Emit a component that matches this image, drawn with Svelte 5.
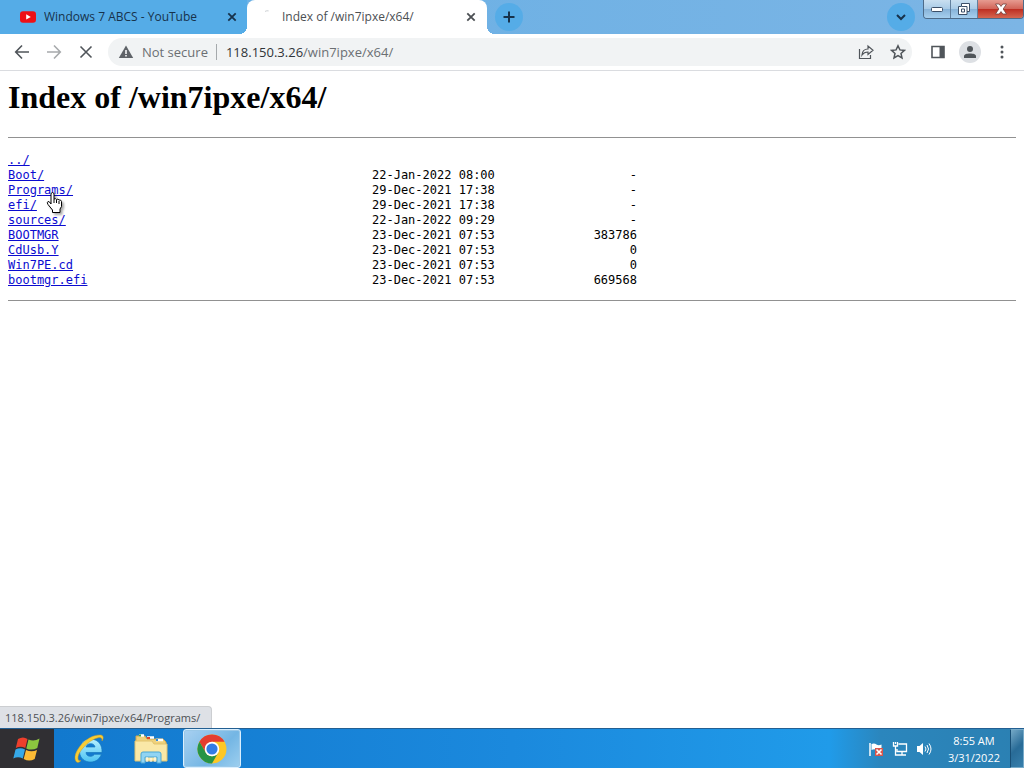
<script>
  const entries = [
    { name: '../', date: '', size: '' },
    { name: 'Boot/', date: '22-Jan-2022 08:00', size: '-' },
    { name: 'Programs/', date: '29-Dec-2021 17:38', size: '-' },
    { name: 'efi/', date: '29-Dec-2021 17:38', size: '-' },
    { name: 'sources/', date: '22-Jan-2022 09:29', size: '-' },
    { name: 'BOOTMGR', date: '23-Dec-2021 07:53', size: '383786' },
    { name: 'CdUsb.Y', date: '23-Dec-2021 07:53', size: '0' },
    { name: 'Win7PE.cd', date: '23-Dec-2021 07:53', size: '0' },
    { name: 'bootmgr.efi', date: '23-Dec-2021 07:53', size: '669568' }
  ];
  let address = $state('118.150.3.26/win7ipxe/x64/');
</script>

{#snippet cross()}
  <svg width="10" height="10" viewBox="0 0 10 10" aria-hidden="true"><path d="M1.3 1.3l7.4 7.4M8.7 1.3L1.3 8.7" stroke="currentColor" stroke-width="1.8" fill="none" /></svg>
{/snippet}

<div class="screen">
  <header class="strip">
    <div class="tab idle">
      <svg width="16" height="12" viewBox="0 0 16 12" aria-hidden="true"><rect width="16" height="11.5" y=".3" rx="3" fill="#ee1016" /><path d="M6.2 3.3v5.2L10.8 5.9z" fill="#fff" /></svg>
      <span class="title">Windows 7 ABCS - YouTube</span>
      <button class="close" aria-label="Close tab">{@render cross()}</button>
    </div>
    <div class="tab active">
      <svg class="spinner" width="16" height="16" viewBox="0 0 16 16" aria-hidden="true"><path d="M5 2.4Q7 1.4 8.6 1.9" stroke="#ccd0d3" fill="none" /></svg>
      <span class="title">Index of /win7ipxe/x64/</span>
      <button class="close" aria-label="Close tab">{@render cross()}</button>
    </div>
    <button class="round" aria-label="New tab"><svg width="14" height="14" viewBox="0 0 14 14"><path d="M7 1.5v11M1.5 7h11" stroke="currentColor" stroke-width="2" /></svg></button>
    <button class="round search" aria-label="Search tabs"><svg width="12" height="12" viewBox="0 0 12 12"><path d="M2 4l4 4 4-4" fill="none" stroke="currentColor" stroke-width="2" /></svg></button>
    <div class="controls">
      <button aria-label="Minimize"><svg width="14" height="8" viewBox="0 0 14 8"><rect x="1.5" y="2.5" width="11" height="4" rx="1" fill="#fff" stroke="#3b4f68" /></svg></button>
      <button aria-label="Restore"><svg width="14" height="14" viewBox="0 0 14 14"><path d="M4.500 1.500h8v8h-2.500v3H1.500v-8h3z" fill="#fff" stroke="#3b4f68" /><path d="M4.500 7h3v3h-3zM5 4.500h5v5" fill="none" stroke="#3b4f68" /></svg></button>
      <button class="quit" aria-label="Close"><svg width="14" height="12" viewBox="0 0 14 12"><path d="M1.500 1h3.700L7 3.400 8.800 1h3.700L9.200 6l3.300 5H8.800L7 8.600 5.200 11H1.500L4.800 6z" fill="#fff" stroke="#71423f" stroke-width=".8" /></svg></button>
    </div>
  </header>

  <nav class="toolbar" aria-label="Navigation">
    <button aria-label="Back"><svg width="16" height="16" viewBox="0 0 16 16"><path d="M15 8H2M8 1.500L1.700 8 8 14.500" /></svg></button>
    <button class="faded" aria-label="Forward"><svg width="16" height="16" viewBox="0 0 16 16"><path d="M1 8h13M8 1.500L14.300 8 8 14.500" /></svg></button>
    <button aria-label="Stop"><svg width="16" height="16" viewBox="0 0 16 16"><path d="M2.500 2.500l11 11M13.500 2.500l-11 11" /></svg></button>
    <div class="omnibox">
      <svg class="warn" width="16" height="16" viewBox="0 0 16 16" aria-hidden="true"><path d="M8 1.500L15.200 14H.8z" fill="#5f6368" /><path d="M8 6v4M8 11v1.600" stroke="#fff" stroke-width="1.500" /></svg>
      <span class="secure">Not secure</span>
      <label class="address">
        <span class="shown" aria-hidden="true">{address.split('/')[0]}<i>{address.slice(address.indexOf('/'))}</i></span>
        <input aria-label="Address" bind:value={address} />
      </label>
      <button aria-label="Share"><svg width="18" height="18" viewBox="0 0 18 18"><path d="M2.500 6v9.500h11V12M5 12c.3-4 2.500-6 6-6V3l5 4.300-5 4.200V9c-3 0-4.500.8-6 3z" stroke-width="1.200" /></svg></button>
      <button aria-label="Bookmark this page"><svg width="16" height="16" viewBox="0 0 16 16"><path d="M8 1.800l1.900 4.100 4.500.5-3.400 3 1 4.500L8 11.600l-4 2.300 1-4.500-3.400-3 4.500-.5z" stroke-width="1.500" /></svg></button>
    </div>
    <button aria-label="Side panel"><svg width="16" height="16" viewBox="0 0 16 16"><path d="M2 2.500h12v11H2z" stroke-width="1.600" /><path d="M9.500 2.500H14v11H9.500z" fill="#50555a" stroke="none" /></svg></button>
    <button class="profile" aria-label="Profile"><svg width="14" height="14" viewBox="0 0 14 14"><circle cx="7" cy="4" r="3" fill="#50555a" stroke="none" /><path d="M1 13v-2c0-3.300 12-3.300 12 0v2z" fill="#50555a" stroke="none" /></svg></button>
    <button aria-label="Menu"><svg width="16" height="16" viewBox="0 0 16 16"><g fill="#50555a" stroke="none"><circle cx="8" cy="3" r="1.500" /><circle cx="8" cy="8" r="1.500" /><circle cx="8" cy="13" r="1.500" /></g></svg></button>
  </nav>

  <main>
    <h1>Index of /win7ipxe/x64/</h1>
    <hr />
    <table aria-label="Files">
      <tbody>
        {#each entries as entry}
          <tr><td class="name"><a href="#{entry.name}">{entry.name}</a></td><td class="date">{entry.date}</td><td class="size">{entry.size}</td></tr>
        {/each}
      </tbody>
    </table>
    <hr />
    <svg class="pointer" width="17" height="23" viewBox="0 0 17 23" aria-hidden="true"><path d="M5 13V2.500Q6.500.500 8 2.500V8q1.500-1 2.500.5 1.500-1 2.500.5 2-.5 2.500 1.500v5L14 18v3.500H6.500V19L2 13.500q-1.500-2 0-3 1.500-.3 3 2.500z" fill="#fff" stroke="#000" /><path d="M8 8v4M10.500 9v3M13 10v3" stroke="#000" /></svg>
    <div class="status">118.150.3.26/win7ipxe/x64/Programs/</div>
  </main>

  <footer class="taskbar">
    <button class="start" aria-label="Start">
      <svg width="28" height="26" viewBox="0 0 28 26"><path d="M5 3q5-3 9.500 0L12.300 12Q7.500 9.500 2.800 12z" fill="#ed3f2c" /><path d="M15.500 3.500Q21 6 26.500 2.500L24.300 12q-5.500 3-11 .4z" fill="#8bc53f" /><path d="M2.500 13.500Q7.500 11 12 13.500L9.800 22.500Q5 20 .3 22.500z" fill="#36a9e8" /><path d="M13 14q5.500 2.500 11 0L21.700 23q-5.500 3-11 0z" fill="#fdbb35" /></svg>
    </button>
    <button class="app" aria-label="Internet Explorer">
      <svg width="32" height="32" viewBox="0 0 32 32"><defs><linearGradient id="ie" y2="1" x2="0"><stop stop-color="#b6f0ff" /><stop offset="1" stop-color="#4cc3f3" /></linearGradient></defs><path fill-rule="evenodd" d="M29 19.500H13c.5 4.500 6 5 8.500 1.800h7C26 27.500 21 29.500 16 29 9.500 28.200 6 23 6.500 17 7 9.500 12 5.500 18 6c7.500.5 11.500 6 11 13.500zM13 14h9c-.5-4.500-8-4.500-9 0z" fill="url(#ie)" stroke="#1475bd" stroke-width=".7" /><path d="M3.500 29C-3 22 13 1 27.500 2c3 .2 3.500 3 1.500 6 .3-3-1-4-4-3.200C15 7 4 20 5 26c.2 1.500 1.500 2 3 1.500-1.500 1.700-3 2.500-4.500 1.500z" fill="#f7cd35" stroke="#ca9827" stroke-width=".5" /></svg>
    </button>
    <button class="app" aria-label="File Explorer">
      <svg width="34" height="32" viewBox="0 0 34 32"><path d="M2 3h9l2 3h16l3 3v18H2z" fill="#efd17b" stroke="#d2a851" /><path d="M5 2.500h5M13 4.500h7M22 7h7" stroke="#fff" stroke-width="2.500" /><path d="M5 2.500h2" stroke="#36a44b" stroke-width="2" /><path d="M13 5h3" stroke="#dc482c" stroke-width="2" /><path d="M22 7h2" stroke="#348bdb" stroke-width="2" /><path d="M1 8h17l2 3h13v17H1z" fill="#fae8a7" stroke="#e1c36e" /><path d="M7 30v-9q0-2 2-2h16q2 0 2 2v9h-4v-6H11v6z" fill="#91d4f3" stroke="#4ba7d6" /><path d="M13 24v5M17 25v4M21 24v5" stroke="#fff" /></svg>
    </button>
    <button class="app current" aria-label="Google Chrome">
      <svg width="30" height="30" viewBox="0 0 30 30"><circle cx="15" cy="15" r="14.500" fill="#fcc725" /><path d="M2.440 7.750A14.500 14.500 0 0 1 27.560 7.750H15L8.700 18.600z" fill="#e43d30" /><path d="M2.440 7.750A14.500 14.500 0 0 0 15 29.500L21.300 18.600A7.250 7.250 0 0 1 8.720 18.600z" fill="#279447" /><circle cx="15" cy="15" r="7.250" fill="#fff" /><circle cx="15" cy="15" r="5.600" fill="#327ce5" /></svg>
    </button>
    <div class="tray">
      <button aria-label="Action Center"><svg width="16" height="16" viewBox="0 0 16 16"><path d="M2 2v13" stroke="#fff" stroke-width="1.500" /><path d="M3.500 3q3-1 5 .5t5 0v6q-3 1-5-.5t-5 0z" fill="#fff" /><path d="M7 7h8v8H7z" fill="#d8564c" /><path d="M8.500 8.500l5 5m0-5l-5 5" stroke="#fff" stroke-width="1.600" /></svg></button>
      <button aria-label="Network"><svg width="16" height="16" viewBox="0 0 16 16"><path d="M6.500 3h8v7.500H5V8M10 10.500V14M6 14h8M1.500 1v4h4V1M3.500 5v9H7M3.500 1v2" fill="none" stroke="#fff" stroke-width="1.300" /></svg></button>
      <button aria-label="Volume"><svg width="16" height="16" viewBox="0 0 16 16"><path d="M1 5h2.500L7 2v12l-3.500-3H1z" fill="#fff" /><path d="M9 5.500q2 2.500 0 5M11 4q3 4 0 8M13 2.500q4 5.500 0 11" fill="none" stroke="#fff" /></svg></button>
      <time datetime="2022-03-31T08:55">8:55 AM<br />3/31/2022</time>
      <button class="desktop" aria-label="Show desktop"></button>
    </div>
  </footer>
</div>

<style>
  :global(body) { margin: 0; }
  * { box-sizing: border-box; }
  button { display: grid; place-items: center; margin: 0; padding: 0; border: 0; background: none; color: inherit; flex: none; }
  svg { display: block; flex: none; }
  .screen { display: flex; flex-direction: column; min-height: 100vh; background: #fff; font: 12px/16px "Open Sans", sans-serif; }

  .strip { display: flex; align-items: flex-end; height: 34px; background: linear-gradient(90deg, #64aee4, #7cb5e5); color: #17324b; }
  .tab { display: flex; align-items: center; height: 34px; flex: 0 1 240px; min-width: 0; padding: 0 11px 0 13px; gap: 8px; }
  .idle { flex-basis: 247px; padding-left: 20px; padding-right: 10px; background: #55ace7; }
  .active { position: relative; background: #fff; border-radius: 8px 8px 0 0; color: #4b4f53; }
  .active::before, .active::after { content: ""; position: absolute; bottom: 0; width: 8px; height: 8px; }
  .active::before { right: 100%; background: radial-gradient(circle at 0 0, #55ace7 8px, #fff 8px); }
  .active::after { left: 100%; background: radial-gradient(circle at 100% 0, #70b1e5 8px, #fff 8px); }
  .title { flex: 1; white-space: nowrap; overflow: hidden; }
  .spinner { margin-right: -2px; }
  .close { width: 10px; height: 16px; }
  .round { width: 28px; height: 28px; margin: 0 0 3px 8px; border-radius: 50%; background: #55ace7; }
  .search { margin-left: auto; margin-right: 8px; }
  .controls { display: flex; align-self: flex-start; height: 19px; border: 1px solid #4d6b89; border-top: 0; border-radius: 0 0 4px 4px; overflow: hidden; }
  .controls button { width: 27px; background: linear-gradient(#c9dff0, #a8cbe7 50%, #86b2d8 50%, #a6cfee); border-right: 1px solid #62809e; }
  .controls .quit { width: 45px; border: 0; background: linear-gradient(#e69b90, #d16357 50%, #bd2d21 50%, #d56650); }

  .toolbar { display: flex; align-items: center; gap: 4px; height: 37px; padding: 0 8px; border-bottom: 1px solid #dadce0; }
  .toolbar button { width: 28px; height: 28px; }
  .toolbar button svg { fill: none; stroke: #50555a; stroke-width: 1.6; }
  .toolbar .faded { opacity: .5; }
  .omnibox { display: flex; flex: 1; align-items: center; height: 28px; min-width: 0; margin: 0 8px 0 4px; padding: 0 0 0 10px; border-radius: 14px; background: #f1f3f4; font-size: 13px; color: #6b6f73; }
  .omnibox button { margin-left: 4px; }
  .secure { margin: 0 9px 0 8px; padding-right: 8px; border-right: 1px solid #a5a9ac; white-space: nowrap; }
  .address { position: relative; flex: 1; min-width: 0; }
  .shown { color: #303438; white-space: nowrap; }
  .shown i { font-style: normal; color: #6b6f73; }
  .address input { position: absolute; inset: 0; width: 100%; padding: 0; border: 0; outline: 0; background: none; font: inherit; color: transparent; caret-color: #303438; }
  .toolbar .profile { width: 22px; height: 22px; margin: 0 3px; border-radius: 50%; background: #dde0e4; }

  main { position: relative; flex: 1; padding: 8px; color: #000; }
  h1 { margin: 0 0 22px; font: bold 32px/36px "Liberation Serif", serif; }
  hr { margin: 0; border: 0; border-top: 1px solid #919191; }
  table { margin: 15px 0 12px; border-collapse: collapse; font: 12px/15px "DejaVu Sans Mono", monospace; }
  td { height: 15px; padding: 0; white-space: nowrap; }
  .name { width: 364px; }
  .date { width: 144px; }
  .size { width: 121px; text-align: right; }
  a { color: #0b0bd0; }
  .pointer { position: absolute; left: 46px; top: 120px; filter: drop-shadow(2px 2px 1px #0005); }
  .status { position: absolute; left: 0; bottom: 0; padding: 3px 11px 2px 5px; border: 1px solid #ccced1; border-width: 1px 1px 0 0; border-top-right-radius: 4px; background: #dee1e6; font-size: 11px; color: #4c5054; }

  .taskbar { display: flex; height: 40px; border-top: 1px solid #235f92; background: linear-gradient(90deg, #1177cc, #1b89dd 50%, #209be9 81%, #2b86bd 86%, #2b80b2); color: #fff; }
  .start { width: 54px; background: #302f33; }
  .app { width: 58px; margin: 0 2px; }
  .app:nth-child(2) { margin-left: 6px; }
  .app.current { margin-left: 1px; border: 1px solid #d9efff; border-radius: 3px; background: linear-gradient(135deg, #a9d1f1, #74b6e4 60%, #9dcfef); box-shadow: inset 0 0 0 1px #9ac8e8; }
  .tray { display: flex; align-items: center; margin-left: auto; gap: 8px; }
  time { margin: 0 2px 0 8px; font-size: 11px; text-align: center; line-height: 17px; }
  .desktop { align-self: stretch; width: 14px; border: 1px solid #78abc9; border-left-color: #174e75; background: linear-gradient(135deg, #75a9c7, #286b97 50%, #377fac); }
</style>
